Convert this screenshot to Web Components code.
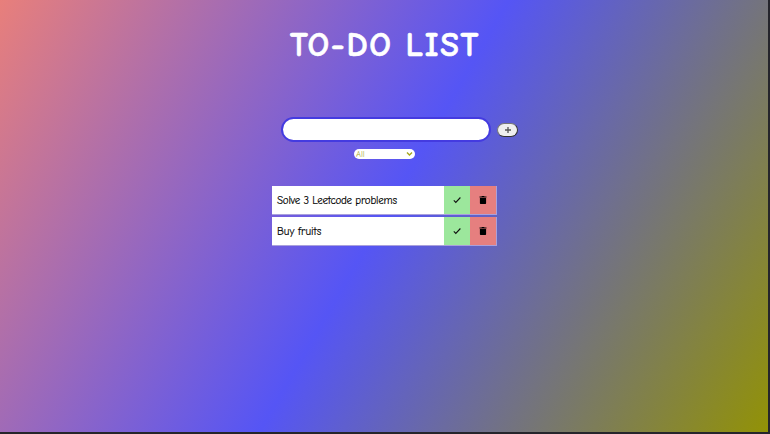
<!DOCTYPE html>
<html lang="en"><head><meta charset="utf-8"><title>To-do list</title>
<style>html,body{margin:0;height:100%;overflow:hidden;background:#25252b}</style></head>
<body><todo-app></todo-app>
<script>
const FONT='"Comic Sans MS","Comic Neue",Lato,"Open Sans",cursive';
const define=(name,html)=>customElements.define(name,class extends HTMLElement{
  constructor(){super();this.attachShadow({mode:'open'}).innerHTML=html;}
});
define('todo-title',`<style>:host{display:block;box-sizing:border-box;height:88px;padding-top:2px;margin-left:290px;color:#fff;font:bold 34px/87px ${FONT};letter-spacing:1.7px;word-spacing:-1px;-webkit-text-stroke:.6px #fff;white-space:nowrap}</style><slot></slot>`);
define('todo-form',`<style>:host{display:flex;align-items:center;gap:6px;margin:29px 0 0 281px;height:25px}
input{box-sizing:border-box;width:210px;height:25px;border:2px solid #443be0;border-radius:13px;padding:0 10px;background:#fff;background-clip:border-box;outline:0}
button{box-sizing:border-box;width:21px;height:14px;margin-top:1px;padding:0;border:1px solid;border-color:#777 #333 #333 #777;border-radius:7px;background:#efefef;display:grid;place-items:center}
svg{display:block}</style><input aria-label="New task"><button aria-label="Add"><svg width="8" height="8" viewBox="0 0 8 8"><path d="M4 1v6M1 4h6" stroke="#555" stroke-width="1.3"/></svg></button>`);
define('todo-filter',`<style>:host{display:flex;box-sizing:border-box;align-items:center;justify-content:space-between;width:61px;height:10px;margin:7px 0 0 354px;padding:0 2px;border-radius:5px;background:#fff;color:#b0b03c;font:8.5px/10px ${FONT}}
svg{display:block}</style><slot></slot><svg width="7" height="6" viewBox="0 0 7 6"><path d="M1 1.5l2.5 2.5L6 1.5" fill="none" stroke="#a6a61c" stroke-width="1.4"/></svg>`);
define('todo-item',`<style>:host{display:flex;box-sizing:border-box;width:225px;height:29px;border:solid #a9a0dc;border-width:0 1px 1px 0;color:#000;font:11px/29px ${FONT}}
.text{flex:1;padding-left:5px;background:#fff;white-space:nowrap}
.text span{letter-spacing:var(--track,0);-webkit-text-stroke:.15px #000}
.act{width:26px;display:grid;place-items:center}.done{background:#9ce79c}.del{background:#e67f7f}
svg{display:block}</style><div class="text"><span><slot></slot></span></div>
<div class="act done"><svg width="8" height="8" viewBox="0 0 8 8"><path d="M.8 4.4l2 2L7.4 1.5" fill="none" stroke="#111" stroke-width="1.1"/></svg></div>
<div class="act del"><svg width="8" height="8" viewBox="0 0 8 8"><path d="M.5.6h2L2.9 0h2.2l.4.6h2v1h-7zM.9 2h6.2v5.3q0 .7-.7.7H1.6q-.7 0-.7-.7z"/></svg></div>`);
define('todo-list',`<style>:host{display:flex;flex-direction:column;gap:2px;margin:27px 0 0 272px}</style><slot></slot>`);
define('todo-app',`<style>:host{display:flow-root;width:768px;height:432px;background:linear-gradient(120deg,#e87f7b,#5555f5 50%,#929206)}</style>
<todo-title>TO-DO LIST</todo-title><todo-form></todo-form><todo-filter>All</todo-filter>
<todo-list><todo-item style="--track:-.24px">Solve 3 Leetcode problems</todo-item><todo-item>Buy fruits</todo-item></todo-list>`);
</script></body></html>
